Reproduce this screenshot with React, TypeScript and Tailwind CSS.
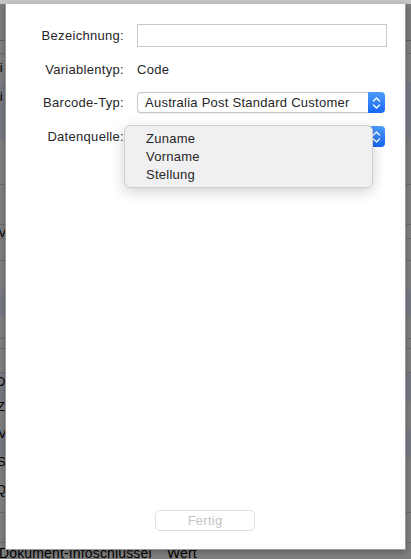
import React from "react";

const font = { fontFamily: '"Liberation Sans", Arial, sans-serif' };

function Stepper() {
  return (
    <div className="w-[17px] h-full rounded-r-[4px] bg-gradient-to-b from-[#4c9bfa] to-[#1667f2] flex items-center justify-center">
      <svg width="9" height="14" viewBox="0 0 9 14" fill="none">
        <path d="M1.5 5 L4.5 2 L7.5 5" stroke="white" strokeWidth="1.4" strokeLinecap="round" strokeLinejoin="round" />
        <path d="M1.5 9 L4.5 12 L7.5 9" stroke="white" strokeWidth="1.4" strokeLinecap="round" strokeLinejoin="round" />
      </svg>
    </div>
  );
}

function Select({ value }: { value: string }) {
  return (
    <div className="w-[248px] h-[21px] flex items-stretch">
      <div className="flex-1 h-full border border-r-0 border-[#c9c9c9] rounded-l-[4px] bg-white pl-[7px] flex items-center text-[13px] tracking-[0.25px] text-[#262626] shadow-[0_0.5px_1px_rgba(0,0,0,0.08)]">
        {value}
      </div>
      <Stepper />
    </div>
  );
}

function Label({ children }: { children: React.ReactNode }) {
  return <div className="w-[118px] text-right text-[13px] tracking-[0.3px] text-[#262626]">{children}</div>;
}

export default function App() {
  return (
    <div className="relative w-[411px] h-[559px] overflow-hidden bg-[#7e7e7e]" style={font}>
      {/* background window (dimmed) */}
      <div className="absolute inset-0">
        <div className="h-[4px] bg-[#c6c6c6]" />
        <div className="h-[37px] bg-[#7a7a7a] border-b border-[#5e5e5e]" />
        <div className="h-[13px] bg-[#7e7e7e] border-b border-[#6a6a6a]" />
        <div className="h-[28px] bg-[#7e7e7e]" />
        <div className="h-[58px] bg-[#767983]" />
        <div className="h-[45px] bg-[#7e7e7e] border-b border-[#6a6a6a]" />
        <div className="h-[40px] bg-[#7e7e7e] border-b border-[#6a6a6a]" />
        <div className="h-[14px] bg-[#7e7e7e] border-b border-[#6a6a6a]" />
        <div className="h-[22px] bg-[#7e7e7e] border-b border-[#6a6a6a]" />
        <div className="h-[28px] bg-[#7e7e7e]" />
        <div className="h-[28px] bg-[#767983]" />
        <div className="h-[22px] bg-[#7e7e7e] border-b border-[#6a6a6a]" />
        <div className="h-[10px] bg-[#7e7e7e] border-b border-[#6a6a6a]" />
        <div className="h-[24px] bg-[#7e7e7e] border-b border-[#6a6a6a]" />
        <div className="h-[28px] bg-[#767983]" />
        <div className="h-[28px] bg-[#7e7e7e]" />
        <div className="h-[28px] bg-[#767983]" />
        <div className="h-[28px] bg-[#7e7e7e]" />
        <div className="h-[28px] bg-[#7e7e7e] border-b border-[#6a6a6a]" />
        <div className="h-[30px] bg-[#7e7e7e] border-b border-[#6a6a6a]" />
      </div>
      {/* left strip text fragments */}
      <div className="absolute left-[-30px] top-[60px] text-[13px] text-black leading-[16px]">Bezei</div>
      <div className="absolute left-[-30px] top-[89px] text-[13px] text-black leading-[16px]">Bezei</div>
      <div className="absolute left-[-2px] top-[225px] text-[13px] text-black leading-[16px]">V</div>
      <div className="absolute left-[-4px] top-[374px] text-[13px] text-black leading-[16px]">D</div>
      <div className="absolute left-[-3px] top-[399px] text-[13px] text-black leading-[16px]">Z</div>
      <div className="absolute left-[-2px] top-[426px] text-[13px] text-black leading-[16px]">V</div>
      <div className="absolute left-[-3px] top-[454px] text-[13px] text-black leading-[16px]">S</div>
      <div className="absolute left-[-4px] top-[482px] text-[13px] text-black leading-[16px]">Q</div>
      <div className="absolute left-[-1px] top-[545px] text-[14px] tracking-[0.15px] text-black leading-[16px] flex">
        <span className="w-[168px]">Dokument-Infoschlüssel</span>
        <span>Wert</span>
      </div>

      {/* sheet */}
      <div className="absolute left-[5px] top-[4px] w-[401px] h-[546px] bg-white border-l border-r border-b border-[#9b9b9b] shadow-[0_2px_6px_rgba(0,0,0,0.25)] flex flex-col">
        <div className="flex items-center h-[23px] mt-[20px]">
          <Label>Bezeichnung:</Label>
          <div className="ml-[13px] w-[250px] h-[23px] border border-[#c8c8c8] bg-white" />
        </div>
        <div className="flex items-center h-[22px] mt-[12px]">
          <Label>Variablentyp:</Label>
          <div className="ml-[13px] text-[13px] tracking-[0.3px] text-[#262626]">Code</div>
        </div>
        <div className="flex items-center h-[21px] mt-[11px]">
          <Label>Barcode-Typ:</Label>
          <div className="ml-[13px]">
            <Select value="Australia Post Standard Customer" />
          </div>
        </div>
        <div className="flex items-center h-[21px] mt-[13px]">
          <Label>Datenquelle:</Label>
          <div className="ml-[13px]">
            <Select value="" />
          </div>
        </div>
        <div className="flex-1" />
        <div className="flex justify-start pl-[149px] mb-[18px]">
          <div className="w-[100px] h-[21px] border border-[#dedede] rounded-[5px] flex items-center justify-center text-[13px] tracking-[0.25px] text-[#c4c4c4]">
            Fertig
          </div>
        </div>
      </div>

      {/* popup menu */}
      <div className="absolute left-[124px] top-[125px] w-[249px] h-[63px] rounded-[6px] bg-[#f0f0f2] border border-[#cfcfcf] shadow-[0_4px_14px_rgba(0,0,0,0.18)] pt-[4px] text-[13px] tracking-[0.25px] text-[#262626]">
        <div className="h-[18px] leading-[18px] pl-[21px]">Zuname</div>
        <div className="h-[18px] leading-[18px] pl-[21px]">Vorname</div>
        <div className="h-[18px] leading-[18px] pl-[21px]">Stellung</div>
      </div>
    </div>
  );
}
